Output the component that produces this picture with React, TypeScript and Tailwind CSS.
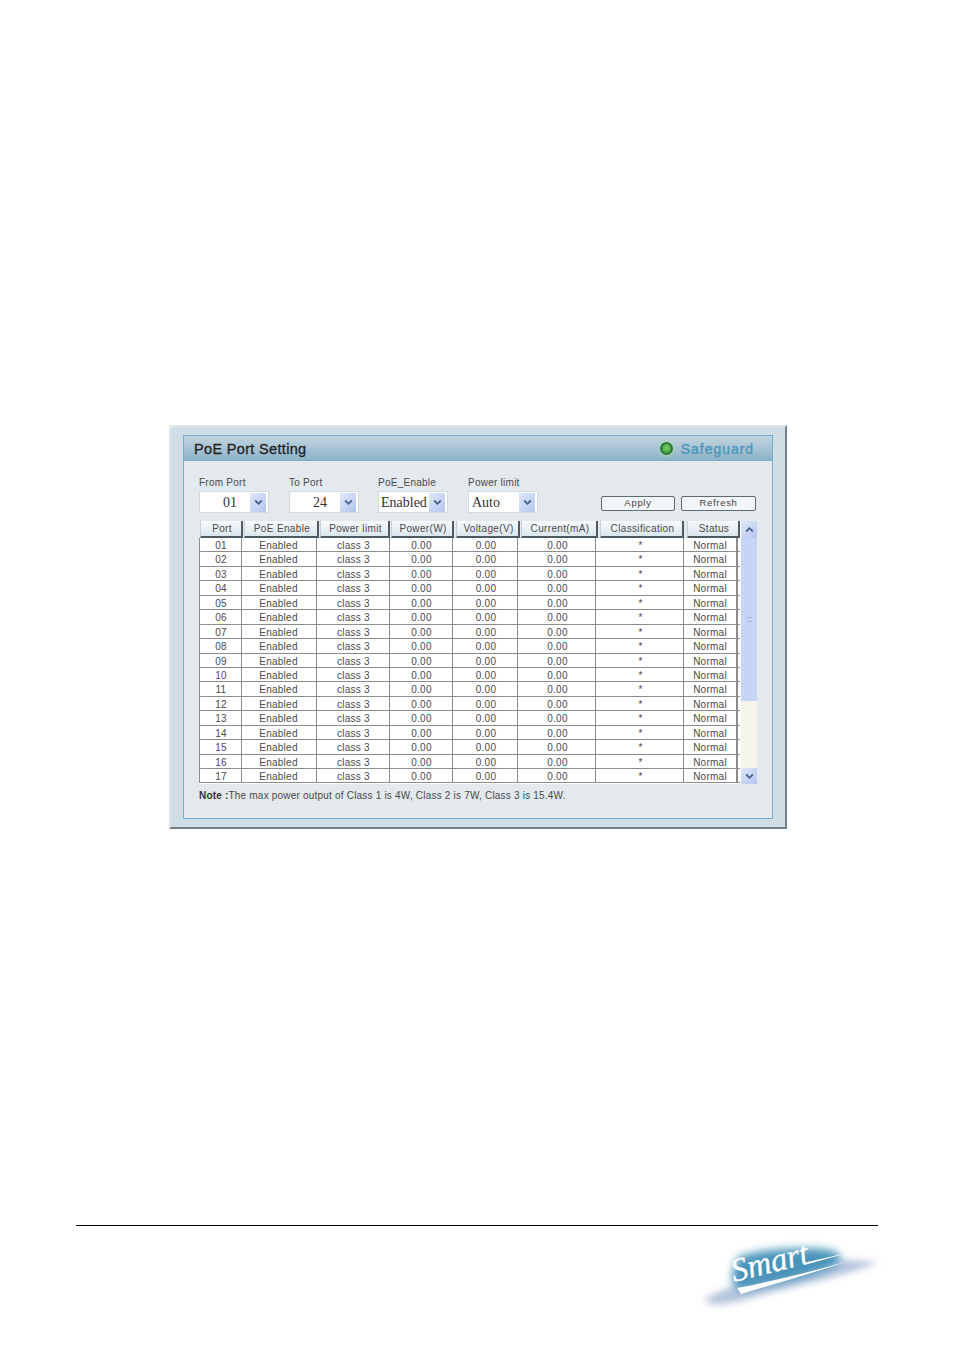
const SANS = "font-['Liberation_Sans',Arial,sans-serif]";
const SERIF = "font-['Liberation_Serif','Times_New_Roman',serif]";

const heads = [
  ["Port", "w-[43px]"],
  ["PoE Enable", "w-[75px]"],
  ["Power limit", "w-[70px]"],
  ["Power(W)", "w-[63px]"],
  ["Voltage(V)", "w-[64px]"],
  ["Current(mA)", "w-[77px]"],
  ["Classification", "w-[84px]"],
  ["Status", "w-[53px]"],
];
const gaps = ["mr-px", "mr-px", "mr-px", "mr-[2px]", "mr-px", "mr-[2px]", "mr-[3px]", ""];
const colW = ["w-[43px]", "w-[75px]", "w-[73px]", "w-[63px]", "w-[65px]", "w-[78px]", "w-[88px]", "w-[54px]"];
const rows = Array.from({ length: 17 }, (_, i) => String(i + 1).padStart(2, "0"));

function Chevron({ up = false }: { up?: boolean }) {
  return (
    <svg width="9" height="7" viewBox="0 0 9 7" className={up ? "rotate-180" : ""}>
      <path d="M1.2 1.5 4.5 4.8 7.8 1.5" fill="none" stroke="#46628f" strokeWidth="1.8" />
    </svg>
  );
}

function ArrowBtn({ up = false, cls = "" }: { up?: boolean; cls?: string }) {
  return (
    <div className={`flex items-center justify-center bg-gradient-to-br from-[#dfe7fa] to-[#b4c6ef] ${cls}`}>
      <Chevron up={up} />
    </div>
  );
}

function Field({ label, value, cls, mr }: { label: string; value: string; cls: string; mr: string }) {
  return (
    <div className={`flex flex-col w-[70px] ${mr}`}>
      <div className="h-[15px] text-[10px] leading-[17px] tracking-[0.25px] text-[#4a4a4a]">{label}</div>
      <div className="h-[22px] mt-[2px] bg-white border border-[#d3dae0] flex items-center justify-between pr-[2px]">
        <span className={`${SERIF} text-[14px] text-[#333] ${cls}`}>{value}</span>
        <ArrowBtn cls="w-[16px] h-[19px]" />
      </div>
    </div>
  );
}

function Btn({ label, cls }: { label: string; cls: string }) {
  return (
    <div className={`h-[15px] bg-[#f3f5f6] border border-[#5f6b72] rounded-[2px] flex items-center justify-center text-[9.5px] tracking-[0.7px] text-[#444] ${cls}`}>
      {label}
    </div>
  );
}

function Logo() {
  return (
    <svg width="190" height="72" viewBox="0 0 190 72" className="ml-[692px] mt-[16px] overflow-visible">
      <defs>
        <filter id="b1" x="-30%" y="-60%" width="160%" height="220%"><feGaussianBlur stdDeviation="3.5" /></filter>
        <filter id="b2" x="-30%" y="-60%" width="160%" height="220%"><feGaussianBlur stdDeviation="4.5" /></filter>
      </defs>
      <path d="M12 58 C30 46 50 42 70 38 L150 18 L186 20 C165 30 120 40 80 50 C50 58 25 68 12 58Z" fill="#b4c3dc" filter="url(#b1)" />
      <path d="M48 14 C70 7 115 4 138 8 C152 12 154 20 134 28 C105 38 75 44 52 48 C36 50 38 26 48 14Z" fill="#4a94bb" filter="url(#b2)" />
      <path d="M45 46 C80 39 115 31 153 20 C125 30 85 41 49 52 Z" fill="#ffffff" />
      <path d="M116 20 C128 17 140 14 152 12 C140 15 128 19 116 22Z" fill="#ffffff" />
      <text x="42" y="40" transform="rotate(-14 42 40)" fontFamily="'Liberation Serif', serif" fontStyle="italic" fontSize="33" fill="#ffffff" stroke="#ffffff" strokeWidth="0.3">Smart</text>
    </svg>
  );
}

export default function App() {
  return (
    <div className={`${SANS} w-[954px] h-[1350px] bg-white overflow-hidden pt-[425px]`}>
      <div className="ml-[169px] w-[618px] h-[404px] bg-[#d0dee5] border-t-2 border-l-2 border-t-[#e3e6e8] border-l-[#e3e6e8] border-r-2 border-b-2 border-r-[#77808a] border-b-[#77808a] pt-[8px] pl-[12px]">
        <div className="w-[590px] h-[384px] border border-[#72aed0] bg-[#e3e9ed]">
          <div className="h-[25px] flex items-center justify-between pl-[10px] pr-[18px] bg-gradient-to-b from-[#c3d5df] to-[#8db3ca] border-b border-[#7eaac5]">
            <span className="text-[14.5px] leading-[24px] mt-[1px] tracking-[0.33px] text-[#222] [-webkit-text-stroke:0.3px_#222]">PoE Port Setting</span>
            <div className="flex items-center gap-[8px]">
              <div className="w-[13px] h-[13px] rounded-full bg-[radial-gradient(circle_at_50%_45%,#7fd06a,#2f8f35)] border-2 border-[#2c7a34] shadow-[0_0_4px_#a6e89a]" />
              <span className="text-[14px] mt-[2px] tracking-[0.95px] text-[#4f97bb] [-webkit-text-stroke:0.4px_#4f97bb]">Safeguard</span>
            </div>
          </div>
          <div className="pl-[15px] pt-[13px]">
            <div className="flex items-end h-[39px]">
              <Field label="From Port" value="01" cls="ml-[23px]" mr="mr-[20px]" />
              <Field label="To Port" value="24" cls="ml-[23px]" mr="mr-[19px]" />
              <Field label="PoE_Enable" value="Enabled" cls="ml-[2px]" mr="mr-[20px]" />
              <Field label="Power limit" value="Auto" cls="ml-[3px]" mr="mr-[63px]" />
              <Btn label="Apply" cls="w-[74px] mr-[6px] mb-[2px]" />
              <Btn label="Refresh" cls="w-[75px] mb-[2px]" />
            </div>
            <div className="mt-[8px] w-[558px] h-[263px] flex bg-white">
              <div className="w-[541px] shrink-0">
                <div className="flex h-[17px] pl-px bg-[#e3e9ed]">
                  {heads.map(([h, w], i) => (
                    <div key={h} className={`${w} ${gaps[i]} shrink-0 h-[17px] pl-[2px] bg-gradient-to-b from-[#f8fafb] to-[#dbe6ee] border-r-2 border-b-2 border-r-[#4e5a62] border-b-[#4e5a62] border-l border-l-[#c8d0d6] flex items-center justify-center text-[10px] tracking-[0.35px] text-[#4a4a4a]`}>
                      {h}
                    </div>
                  ))}
                </div>
                {rows.map((r) => (
                  <div key={r} className="flex h-[14.44px] border-b border-[#8c8c8c] text-[10px] leading-[15px] tracking-[0.25px] text-[#4a4a4a]">
                    <div className={`${colW[0]} shrink-0 border-r border-l border-[#8c8c8c] text-center pl-px`}>{r}</div>
                    <div className={`${colW[1]} shrink-0 border-r border-[#8c8c8c] text-center pr-px`}>Enabled</div>
                    <div className={`${colW[2]} shrink-0 border-r border-[#8c8c8c] text-center pl-px`}>class 3</div>
                    <div className={`${colW[3]} shrink-0 border-r border-[#8c8c8c] text-center pl-px`}>0.00</div>
                    <div className={`${colW[4]} shrink-0 border-r border-[#8c8c8c] text-center pl-[2px]`}>0.00</div>
                    <div className={`${colW[5]} shrink-0 border-r border-[#8c8c8c] text-center pl-[2px]`}>0.00</div>
                    <div className={`${colW[6]} shrink-0 border-r border-[#8c8c8c] text-center pl-[2px]`}>*</div>
                    <div className={`${colW[7]} shrink-0 border-r-2 border-[#8c8c8c] text-center`}>Normal</div>
                  </div>
                ))}
              </div>
              <div className="w-[16px] ml-px flex flex-col bg-[#f4f4ec]">
                <ArrowBtn up cls="h-[17px]" />
                <div className="h-[163px] bg-[#c6d4f6] flex items-center justify-center">
                  <div className="w-[5px] h-[5px] border-y border-[#a0b4e0]" />
                </div>
                <div className="flex-1" />
                <ArrowBtn cls="h-[16px]" />
              </div>
            </div>
            <div className="mt-[5px] text-[10px] leading-[13px] tracking-[0.2px] text-[#4a4a4a]">
              <b className="text-[#333]">Note :</b>The max power output of Class 1 is 4W, Class 2 is 7W, Class 3 is 15.4W.
            </div>
          </div>
        </div>
      </div>
      <div className="ml-[76px] mt-[396px] w-[802px] h-px bg-black" />
      <Logo />
    </div>
  );
}
